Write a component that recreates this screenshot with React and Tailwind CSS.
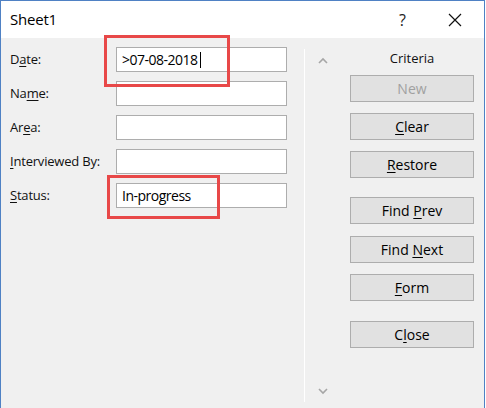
import React from "react";

const fields = [
  { pre: "D", key: "a", post: "te:", value: ">07-08-2018", cursor: true },
  { pre: "Na", key: "m", post: "e:", value: "" },
  { pre: "Ar", key: "e", post: "a:", value: "" },
  { pre: "", key: "I", post: "nterviewed By:", value: "" },
  { pre: "", key: "S", post: "tatus:", value: "In-progress" },
];

function Btn({ pre = "", k = "", post = "", disabled, className = "" }) {
  return (
    <button
      className={`w-[124px] h-[27px] bg-[#e1e1e1] border border-[#adadad] text-[14px] leading-none flex items-center justify-center ${disabled ? "text-[#a0a0a0]" : "text-[#000]"} ${className}`}
    >
      <span>
        {pre}
        {k && <span className="underline underline-offset-2">{k}</span>}
        {post}
      </span>
    </button>
  );
}

function Chevron({ down }) {
  return (
    <svg width="10" height="7" viewBox="0 0 10 7" className="block">
      <path
        d={down ? "M1 1 L5 5 L9 1" : "M1 6 L5 2 L9 6"}
        fill="none"
        stroke="#a6a6a6"
        strokeWidth="1.6"
      />
    </svg>
  );
}

export default function App() {
  return (
    <div
      className="relative w-[485px] h-[408px] bg-white border-l border-r border-t border-[#4f81c4] flex flex-col overflow-hidden"
      style={{ fontFamily: '"Open Sans", "Noto Sans", sans-serif' }}
    >
      <div className="h-[37px] shrink-0 bg-white flex items-center pl-[9px] pr-[22px]">
        <span className="text-[15px] text-[#000] tracking-[-0.2px]">Sheet1</span>
        <span className="ml-auto text-[16px] text-[#222] mr-[42px]">?</span>
        <svg width="14" height="14" viewBox="0 0 14 14">
          <path d="M1 1 L13 13 M13 1 L1 13" stroke="#111" strokeWidth="1.2" />
        </svg>
      </div>

      <div className="flex-1 bg-[#f0f0f0] flex">
        <div className="w-[303px] pt-[9px] pl-[9px] flex flex-col gap-[9px]">
          {fields.map((f, i) => (
            <div key={i} className="flex items-center h-[25px]">
              <span className="w-[106px] text-[13px] text-[#111] tracking-[-0.2px]">
                {f.pre}
                <span className="underline underline-offset-2">{f.key}</span>
                {f.post}
              </span>
              <div className="w-[171px] h-[25px] bg-white border border-[#adadad] flex items-center pl-[5px] text-[14px] text-[#000]">
                <span className="tracking-[-0.5px]">{f.value}</span>
                {f.cursor && <span className="w-px h-[16px] bg-black ml-[2px]" />}
              </div>
            </div>
          ))}
        </div>

        <div className="w-px bg-white mt-[11px] mb-[6px]" />

        <div className="flex-1 flex">
          <div className="w-[45px] flex flex-col justify-between items-center pt-[19px] pb-[13px] pr-[17px] pl-[7px]">
            <Chevron />
            <Chevron down />
          </div>
          <div className="flex flex-col items-start pt-[10px]">
            <div className="w-[124px] text-center text-[13px] text-[#111] h-[20px] leading-[20px]">
              Criteria
            </div>
            <Btn pre="New" disabled className="mt-[7px]" />
            <Btn k="C" post="lear" className="mt-[11px]" />
            <Btn k="R" post="estore" className="mt-[11px]" />
            <Btn pre="Find " k="P" post="rev" className="mt-[19px]" />
            <Btn pre="Find " k="N" post="ext" className="mt-[12px]" />
            <Btn k="F" post="orm" className="mt-[11px]" />
            <Btn pre="C" k="l" post="ose" className="mt-[20px]" />
          </div>
        </div>
      </div>

      <div className="absolute left-[103px] top-[34px] w-[126px] h-[52px] border-[3px] border-[#e84848]" />
      <div className="absolute left-[106px] top-[174px] w-[113px] h-[44px] border-[3px] border-[#e84848]" />
    </div>
  );
}
